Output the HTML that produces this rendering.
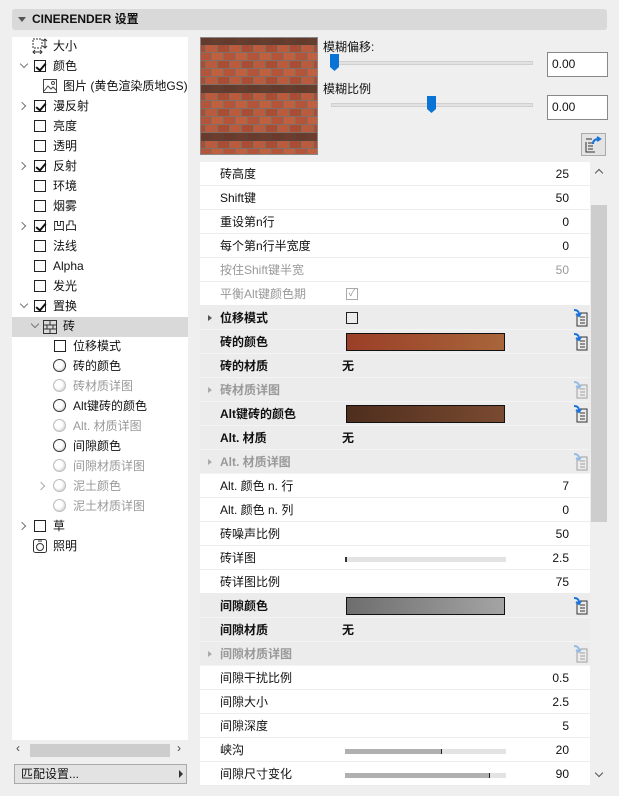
<!DOCTYPE html>
<html><head><meta charset="utf-8"><style>
*{box-sizing:border-box;margin:0;padding:0}
body{width:619px;height:796px;background:#efefef;font-family:"Liberation Sans","Noto Sans CJK SC",sans-serif;font-size:12px;color:#111;position:relative;overflow:hidden}
.abs{position:absolute}
.hdr{left:12px;top:9px;width:595px;height:21px;background:#d9d9d9;border-radius:3px;font-weight:bold;font-size:12px;line-height:21px;padding-left:20px}
.hdr:before{content:"";position:absolute;left:6px;top:8px;border-left:4px solid transparent;border-right:4px solid transparent;border-top:5px solid #555}
.tree{left:12px;top:37px;width:176px;height:703px;background:#fff}
.ti{position:absolute;height:20px;line-height:20px;white-space:nowrap;font-size:12px}
.cb{position:absolute;width:12px;height:12px;border:1px solid #222;background:#fff}
.cb.on:after{content:"";position:absolute;left:3px;top:0px;width:4px;height:8px;border-right:2px solid #111;border-bottom:2px solid #111;transform:rotate(40deg)}
.rad{position:absolute;width:13px;height:13px;border-radius:50%;border:1.5px solid #333;background:radial-gradient(circle at 40% 40%,#fff 40%,#bbb)}
.rad.g{border-color:#bbb}
.chev{position:absolute;width:6px;height:6px;border-right:1.5px solid #777;border-bottom:1.5px solid #777}
.row{position:absolute;left:200px;width:390px;height:24px;line-height:24px;background:#fff;border-bottom:1px solid #ececec}
.row.g{background:#ececec;border-bottom:1px solid #f4f4f4}
.row .l{position:absolute;left:20px}
.row .v{position:absolute;right:21px}
.b{font-weight:bold}
.dis{color:#999}
.sw{position:absolute;left:146px;top:3px;width:159px;height:18px;border:1px solid #111}
.tri{position:absolute;left:8px;top:9px;border-top:3.5px solid transparent;border-bottom:3.5px solid transparent;border-left:4px solid #555}
.ico{position:absolute;left:372px;top:3px}
.sl{position:absolute;left:145px;top:11px;width:161px;height:5px;background:#e3e3e3}
</style></head><body>
<div class="abs hdr">CINERENDER 设置</div>

<div class="abs tree"></div>
<svg class="abs" style="left:32px;top:38px" width="16" height="16"><rect x="1" y="1" width="9" height="9" fill="none" stroke="#333" stroke-dasharray="2 1"/><path d="M13 1v9M11 3l2-2 2 2M11 8l2 2 2-2M1 14h9M3 12l-2 2 2 2M8 12l2 2-2 2" stroke="#333" fill="none"/></svg>
<div class="ti" style="left:53px;top:36px">大小</div>
<div class="chev" style="left:21px;top:61px;transform:rotate(45deg)"></div>
<div class="cb on" style="left:34px;top:60px"></div><div class="ti" style="left:53px;top:56px">颜色</div>
<svg class="abs" style="left:43px;top:79px" width="14" height="14"><rect x=".5" y=".5" width="13" height="13" fill="#fff" stroke="#444"/><path d="M1 12l4-5 3 3 2-2 3 3" stroke="#444" fill="none"/><circle cx="10" cy="4" r="1.5" fill="none" stroke="#444"/></svg>
<div class="ti" style="left:63px;top:76px">图片 (黄色渲染质地GS)</div>
<div class="chev" style="left:19px;top:103px;transform:rotate(-45deg)"></div>
<div class="cb on" style="left:34px;top:100px"></div><div class="ti" style="left:53px;top:96px">漫反射</div>
<div class="cb" style="left:34px;top:120px"></div><div class="ti" style="left:53px;top:116px">亮度</div>
<div class="cb" style="left:34px;top:140px"></div><div class="ti" style="left:53px;top:136px">透明</div>
<div class="chev" style="left:19px;top:163px;transform:rotate(-45deg)"></div>
<div class="cb on" style="left:34px;top:160px"></div><div class="ti" style="left:53px;top:156px">反射</div>
<div class="cb" style="left:34px;top:180px"></div><div class="ti" style="left:53px;top:176px">环境</div>
<div class="cb" style="left:34px;top:200px"></div><div class="ti" style="left:53px;top:196px">烟雾</div>
<div class="chev" style="left:19px;top:223px;transform:rotate(-45deg)"></div>
<div class="cb on" style="left:34px;top:220px"></div><div class="ti" style="left:53px;top:216px">凹凸</div>
<div class="cb" style="left:34px;top:240px"></div><div class="ti" style="left:53px;top:236px">法线</div>
<div class="cb" style="left:34px;top:260px"></div><div class="ti" style="left:53px;top:256px">Alpha</div>
<div class="cb" style="left:34px;top:280px"></div><div class="ti" style="left:53px;top:276px">发光</div>
<div class="chev" style="left:21px;top:301px;transform:rotate(45deg)"></div>
<div class="cb on" style="left:34px;top:300px"></div><div class="ti" style="left:53px;top:296px">置换</div>
<div class="abs" style="left:12px;top:317px;width:176px;height:20px;background:#d9d9d9"></div>
<div class="chev" style="left:32px;top:321px;transform:rotate(45deg)"></div>
<svg class="abs" style="left:43px;top:320px" width="14" height="14"><rect x=".5" y=".5" width="13" height="13" fill="none" stroke="#333"/><path d="M1 5h13M1 9h13M7 1v4M4 5v4M10 5v4M7 9v4" stroke="#333"/></svg>
<div class="ti" style="left:63px;top:316px">砖</div>
<div class="cb" style="left:54px;top:340px"></div><div class="ti" style="left:73px;top:336px">位移模式</div>
<div class="rad" style="left:53px;top:359px"></div><div class="ti" style="left:73px;top:356px">砖的颜色</div>
<div class="rad g" style="left:53px;top:379px"></div><div class="ti dis" style="left:73px;top:376px">砖材质详图</div>
<div class="rad" style="left:53px;top:399px"></div><div class="ti" style="left:73px;top:396px">Alt键砖的颜色</div>
<div class="rad g" style="left:53px;top:419px"></div><div class="ti dis" style="left:73px;top:416px">Alt. 材质详图</div>
<div class="rad" style="left:53px;top:439px"></div><div class="ti" style="left:73px;top:436px">间隙颜色</div>
<div class="rad g" style="left:53px;top:459px"></div><div class="ti dis" style="left:73px;top:456px">间隙材质详图</div>
<div class="chev" style="left:38px;top:483px;transform:rotate(-45deg);border-color:#aaa"></div>
<div class="rad g" style="left:53px;top:479px"></div><div class="ti dis" style="left:73px;top:476px">泥土颜色</div>
<div class="rad g" style="left:53px;top:499px"></div><div class="ti dis" style="left:73px;top:496px">泥土材质详图</div>
<div class="chev" style="left:19px;top:523px;transform:rotate(-45deg)"></div>
<div class="cb" style="left:34px;top:520px"></div><div class="ti" style="left:53px;top:516px">草</div>
<svg class="abs" style="left:33px;top:539px" width="14" height="14"><rect x=".5" y=".5" width="13" height="13" rx="2" fill="none" stroke="#333"/><circle cx="7" cy="8" r="3.5" fill="none" stroke="#333"/><path d="M5 2h4" stroke="#333"/></svg>
<div class="ti" style="left:53px;top:536px">照明</div>
<div class="abs" style="left:12px;top:743px;width:176px;height:14px;background:#efefef"></div>
<div class="abs" style="left:30px;top:744px;width:140px;height:13px;background:#cdcdcd"></div>
<div class="abs" style="left:16px;top:741px;font-size:12px;color:#444">‹</div>
<div class="abs" style="left:177px;top:741px;font-size:12px;color:#444">›</div>
<div class="abs" style="left:14px;top:764px;width:173px;height:20px;border:1px solid #aaa;background:#e3e3e3;line-height:18px;padding-left:6px">匹配设置...</div>
<div class="abs" style="left:179px;top:770px;border-top:4px solid transparent;border-bottom:4px solid transparent;border-left:4px solid #333"></div>

<!-- brick preview -->
<svg class="abs" style="left:200px;top:37px" width="118" height="118">
<defs><pattern id="br" width="24" height="16" patternUnits="userSpaceOnUse">
<rect width="24" height="16" fill="#7f6f66"/>
<rect x="0" y="0" width="11" height="7" fill="#b4553a"/><rect x="12" y="0" width="11" height="7" fill="#c0603f"/>
<rect x="-6" y="8" width="11" height="7" fill="#a94e35"/><rect x="6" y="8" width="11" height="7" fill="#bb5b3d"/><rect x="18" y="8" width="11" height="7" fill="#a94e35"/>
</pattern></defs>
<rect width="118" height="118" fill="url(#br)"/>
<rect y="0" width="118" height="8" fill="#4a3128" opacity=".75"/>
<rect y="48" width="118" height="8" fill="#4a3128" opacity=".75"/>
<rect y="96" width="118" height="8" fill="#4a3128" opacity=".7"/>
<rect x=".5" y=".5" width="117" height="117" fill="none" stroke="#888"/>
</svg>

<div class="abs" style="left:323px;top:38px">模糊偏移:</div>
<div class="abs" style="left:331px;top:61px;width:202px;height:4px;background:#e2e2e2;border:1px solid #d0d0d0"></div>
<svg class="abs" style="left:330px;top:54px" width="10" height="18"><path d="M0 0h9v13l-4.5 4L0 13z" fill="#0a74d6"/></svg>
<div class="abs" style="left:547px;top:52px;width:61px;height:25px;background:#fff;border:1px solid #888;line-height:23px;padding-left:4px;font-size:12px">0.00</div>
<div class="abs" style="left:323px;top:80px">模糊比例</div>
<div class="abs" style="left:331px;top:103px;width:202px;height:4px;background:#e2e2e2;border:1px solid #d0d0d0"></div>
<svg class="abs" style="left:427px;top:96px" width="10" height="18"><path d="M0 0h9v13l-4.5 4L0 13z" fill="#0a74d6"/></svg>
<div class="abs" style="left:547px;top:95px;width:61px;height:25px;background:#fff;border:1px solid #888;line-height:23px;padding-left:4px;font-size:12px">0.00</div>
<div class="abs" style="left:581px;top:133px;width:25px;height:23px;border:1px solid #aaa;background:#e3e3e3"></div>
<svg class="abs" style="left:585px;top:136px" width="18" height="17"><path d="M1 3h6M1 6v10h9M3 7h5M3 10h5M3 13h5" stroke="#333" fill="none"/><path d="M8 8c0-4 3-5 6-5M12 1l3 2-3 2" stroke="#1a73d9" stroke-width="2" fill="none"/></svg>

<div class="row" style="top:162px"><span class="l">砖高度</span><span class="v">25</span></div>
<div class="row" style="top:186px"><span class="l">Shift键</span><span class="v">50</span></div>
<div class="row" style="top:210px"><span class="l">重设第n行</span><span class="v">0</span></div>
<div class="row" style="top:234px"><span class="l">每个第n行半宽度</span><span class="v">0</span></div>
<div class="row dis" style="top:258px"><span class="l">按住Shift键半宽</span><span class="v">50</span></div>
<div class="row dis" style="top:282px"><span class="l">平衡Alt键颜色期</span><span style="position:absolute;left:146px;top:6px;width:12px;height:12px;border:1px solid #aaa;color:#999;font-size:10px;line-height:10px;text-align:center">✓</span></div>
<div class="row g" style="top:306px"><span class="tri"></span><span class="l b">位移模式</span><span style="position:absolute;left:146px;top:6px;width:12px;height:12px;border:1px solid #222"></span><svg class="ico" width="16" height="18"><path d="M5 6v11h10V4H8M8 8h5M8 11h5M8 14h5" stroke="#333" fill="none"/><path d="M2 1c3 0 5 1 5 5M4 5l3 2 2-3" stroke="#1a73d9" stroke-width="2" fill="none"/></svg></div>
<div class="row g" style="top:330px"><span class="l b">砖的颜色</span><span class="sw" style="background:linear-gradient(90deg,#9a3f28,#a8653a)"></span><svg class="ico" width="16" height="18"><path d="M5 6v11h10V4H8M8 8h5M8 11h5M8 14h5" stroke="#333" fill="none"/><path d="M2 1c3 0 5 1 5 5M4 5l3 2 2-3" stroke="#1a73d9" stroke-width="2" fill="none"/></svg></div>
<div class="row g" style="top:354px"><span class="l b">砖的材质</span><span class="b" style="position:absolute;left:142px">无</span></div>
<div class="row g dis" style="top:378px"><span class="tri" style="border-left-color:#aaa"></span><span class="l b">砖材质详图</span><svg class="ico" width="16" height="18" opacity=".4"><path d="M5 6v11h10V4H8M8 8h5M8 11h5M8 14h5" stroke="#333" fill="none"/><path d="M2 1c3 0 5 1 5 5M4 5l3 2 2-3" stroke="#1a73d9" stroke-width="2" fill="none"/></svg></div>
<div class="row g" style="top:402px"><span class="l b">Alt键砖的颜色</span><span class="sw" style="background:linear-gradient(90deg,#4e2e1e,#7a4a30)"></span><svg class="ico" width="16" height="18"><path d="M5 6v11h10V4H8M8 8h5M8 11h5M8 14h5" stroke="#333" fill="none"/><path d="M2 1c3 0 5 1 5 5M4 5l3 2 2-3" stroke="#1a73d9" stroke-width="2" fill="none"/></svg></div>
<div class="row g" style="top:426px"><span class="l b">Alt. 材质</span><span class="b" style="position:absolute;left:142px">无</span></div>
<div class="row g dis" style="top:450px"><span class="tri" style="border-left-color:#aaa"></span><span class="l b">Alt. 材质详图</span><svg class="ico" width="16" height="18" opacity=".4"><path d="M5 6v11h10V4H8M8 8h5M8 11h5M8 14h5" stroke="#333" fill="none"/><path d="M2 1c3 0 5 1 5 5M4 5l3 2 2-3" stroke="#1a73d9" stroke-width="2" fill="none"/></svg></div>
<div class="row" style="top:474px"><span class="l">Alt. 颜色 n. 行</span><span class="v">7</span></div>
<div class="row" style="top:498px"><span class="l">Alt. 颜色 n. 列</span><span class="v">0</span></div>
<div class="row" style="top:522px"><span class="l">砖噪声比例</span><span class="v">50</span></div>
<div class="row" style="top:546px"><span class="l">砖详图</span><span class="sl" style="background:linear-gradient(90deg,#333 0 2px,#e3e3e3 2px)"></span><span class="v">2.5</span></div>
<div class="row" style="top:570px"><span class="l">砖详图比例</span><span class="v">75</span></div>
<div class="row g" style="top:594px"><span class="l b">间隙颜色</span><span class="sw" style="background:linear-gradient(90deg,#6e6e6e,#a4a4a4)"></span><svg class="ico" width="16" height="18"><path d="M5 6v11h10V4H8M8 8h5M8 11h5M8 14h5" stroke="#333" fill="none"/><path d="M2 1c3 0 5 1 5 5M4 5l3 2 2-3" stroke="#1a73d9" stroke-width="2" fill="none"/></svg></div>
<div class="row g" style="top:618px"><span class="l b">间隙材质</span><span class="b" style="position:absolute;left:142px">无</span></div>
<div class="row g dis" style="top:642px"><span class="tri" style="border-left-color:#aaa"></span><span class="l b">间隙材质详图</span><svg class="ico" width="16" height="18" opacity=".4"><path d="M5 6v11h10V4H8M8 8h5M8 11h5M8 14h5" stroke="#333" fill="none"/><path d="M2 1c3 0 5 1 5 5M4 5l3 2 2-3" stroke="#1a73d9" stroke-width="2" fill="none"/></svg></div>
<div class="row" style="top:666px"><span class="l">间隙干扰比例</span><span class="v">0.5</span></div>
<div class="row" style="top:690px"><span class="l">间隙大小</span><span class="v">2.5</span></div>
<div class="row" style="top:714px"><span class="l">间隙深度</span><span class="v">5</span></div>
<div class="row" style="top:738px"><span class="l">峡沟</span><span class="sl" style="background:linear-gradient(90deg,#b0b0b0 0 96px,#222 96px 97px,#e3e3e3 97px)"></span><span class="v">20</span></div>
<div class="row" style="top:762px"><span class="l">间隙尺寸变化</span><span class="sl" style="background:linear-gradient(90deg,#b0b0b0 0 144px,#222 144px 145px,#e3e3e3 145px)"></span><span class="v">90</span></div>

<div class="abs" style="left:591px;top:162px;width:16px;height:624px;background:#efefef"></div>
<div class="abs" style="left:591px;top:205px;width:16px;height:317px;background:#cdcdcd"></div>
<div class="chev" style="left:596px;top:170px;transform:rotate(-135deg);border-color:#555"></div>
<div class="chev" style="left:596px;top:770px;transform:rotate(45deg);border-color:#555"></div>
</body></html>
